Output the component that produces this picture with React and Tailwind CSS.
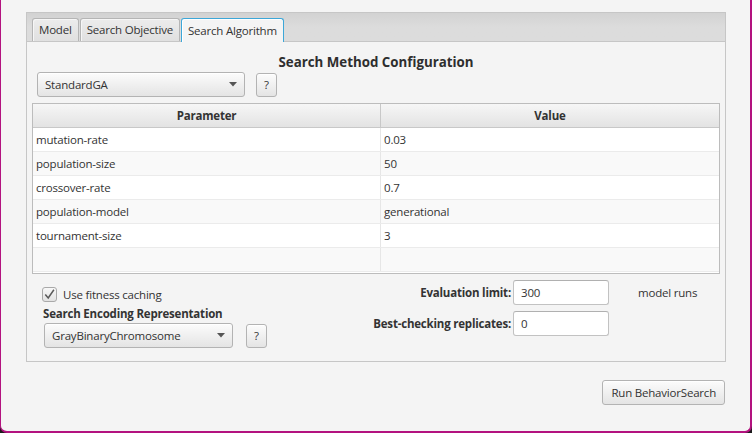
import React from "react";

function Arrow() {
  return (
    <svg width="8" height="5" viewBox="0 0 8 5" className="shrink-0">
      <path d="M0 0 L8 0 L4 4.5 Z" fill="#555555" />
    </svg>
  );
}

function Combo({ label, className }) {
  return (
    <div
      className={
        "flex items-center justify-between h-[25px] pl-[7px] pr-[7px] rounded-[3px] border border-[#b3b3b3] bg-gradient-to-b from-[#fcfcfc] to-[#e4e4e4] shadow-[inset_0_1px_0_#ffffff] text-[#333333] " +
        className
      }
    >
      <span>{label}</span>
      <Arrow />
    </div>
  );
}

function QButton() {
  return (
    <div className="flex items-center justify-center w-[21px] h-[24px] mt-[1px] rounded-[3px] border border-[#b3b3b3] bg-gradient-to-b from-[#fcfcfc] to-[#e4e4e4] shadow-[inset_0_1px_0_#ffffff] text-[#333333]">
      ?
    </div>
  );
}

function Field({ value }) {
  return (
    <div className="flex items-center h-[25px] w-[96px] pl-[7px] rounded-[3px] border border-[#c2c2c2] border-t-[#b0b0b0] bg-white text-[#333333]">
      {value}
    </div>
  );
}

const rows = [
  ["mutation-rate", "0.03"],
  ["population-size", "50"],
  ["crossover-rate", "0.7"],
  ["population-model", "generational"],
  ["tournament-size", "3"],
  ["", ""],
];

export default function App() {
  return (
    <div className="w-[752px] h-[433px] bg-[#1c1c1c] overflow-hidden font-['Open_Sans',sans-serif] text-[11.5px] tracking-[-0.2px] text-[#333333]">
      <div className="w-[752px] h-[433px] bg-[#f4f4f4] border-l border-r-2 border-b-2 border-[#b3127f] rounded-b-[7px] pl-[25px] pt-[12px]">
        <div className="flex flex-col items-end w-[700px]">
          {/* Tab pane */}
          <div className="flex flex-col w-[700px] h-[350px]">
            {/* header */}
            <div className="h-[30px] border-x border-t border-b border-[#c6c6c6] bg-gradient-to-b from-[#d2d2d2] via-[#dcdcdc] to-[#dcdcdc] flex items-end pl-[5px] gap-[1px]">
              <div className="h-[23px] px-[6px] flex items-center rounded-t-[3px] border border-b-0 border-[#b5b5b5] bg-gradient-to-b from-[#ececec] to-[#e0e0e0] shadow-[inset_1px_1px_0_#f6f6f6]">
                Model
              </div>
              <div className="h-[23px] px-[6px] flex items-center rounded-t-[3px] border border-b-0 border-[#b5b5b5] bg-gradient-to-b from-[#ececec] to-[#e0e0e0] shadow-[inset_1px_1px_0_#f6f6f6]">
                Search Objective
              </div>
              <div className="h-[24px] -mb-px px-[6px] flex items-center rounded-t-[3px] border border-b-0 border-[#3da7d8] bg-[#f4f4f4] shadow-[inset_1px_1px_0_#ffffff]">
                Search Algorithm
              </div>
            </div>
            {/* content */}
            <div className="h-[320px] border-x border-b border-[#c6c6c6] px-[5px] pt-[10px] flex flex-col">
              <div className="h-[20px] leading-[20px] text-center font-bold text-[13.3px] tracking-normal text-[#2e2e2e]">
                Search Method Configuration
              </div>
              <div className="flex h-[25px]">
                <Combo label="StandardGA" className="ml-[5px] w-[208px]" />
                <div className="ml-[11px]">
                  <QButton />
                </div>
              </div>
              {/* table */}
              <div className="mt-[6px] w-[688px] border border-[#bcbcbc] bg-white">
                <div className="flex h-[24px] border-b border-[#c8c8c8] bg-gradient-to-b from-[#f6f6f6] to-[#e3e3e3] font-bold">
                  <div className="w-[348px] border-r border-[#c8c8c8] flex items-center justify-center">
                    Parameter
                  </div>
                  <div className="flex-1 flex items-center justify-center">Value</div>
                </div>
                <div className="h-[145px] overflow-hidden">
                  {rows.map((r, i) => (
                    <div
                      key={i}
                      className={
                        "flex h-[24px] border-b border-[#ebebeb] " +
                        (i % 2 === 0 ? "bg-white" : "bg-[#f9f9f9]")
                      }
                    >
                      <div className="w-[348px] border-r border-[#e6e6e6] flex items-center pl-[3px]">
                        {r[0]}
                      </div>
                      <div className="flex-1 flex items-center pl-[3px]">{r[1]}</div>
                    </div>
                  ))}
                </div>
              </div>
              {/* bottom section */}
              <div className="flex">
                <div className="ml-[10px] w-[318px] mt-[13px] flex flex-col">
                  <div className="flex items-center h-[15px]">
                    <div className="w-[15px] h-[15px] rounded-[3px] border border-[#a9a9a9] bg-gradient-to-b from-[#f8f8f8] to-[#e2e2e2] flex items-center justify-center">
                      <svg width="13" height="13" viewBox="0 0 13 13">
                        <path d="M2.3 6.6 L5.2 10 L10.9 1.8" fill="none" stroke="#5a5a5a" strokeWidth="1.5" />
                      </svg>
                    </div>
                    <span className="ml-[6px]">Use fitness caching</span>
                  </div>
                  <div className="mt-[2px] h-[19px] leading-[19px] font-bold ml-[1px]">
                    Search Encoding Representation
                  </div>
                  <div className="flex h-[25px]">
                    <Combo label="GrayBinaryChromosome" className="ml-[2px] w-[189px]" />
                    <div className="ml-[13px]">
                      <QButton />
                    </div>
                  </div>
                </div>
                <div className="mt-[6px] flex flex-col gap-[6px]">
                  <div className="flex items-center">
                    <div className="w-[153px] text-right font-bold pr-[2px]">Evaluation limit:</div>
                    <Field value="300" />
                    <span className="ml-[29px]">model runs</span>
                  </div>
                  <div className="flex items-center">
                    <div className="w-[153px] text-right font-bold pr-[2px]">Best-checking replicates:</div>
                    <Field value="0" />
                  </div>
                </div>
              </div>
            </div>
          </div>
          <div className="mt-[18px] mr-[1px] h-[25px] px-[8px] flex items-center rounded-[3px] border border-[#b3b3b3] bg-gradient-to-b from-[#fcfcfc] to-[#e4e4e4] shadow-[inset_0_1px_0_#ffffff]">
            Run BehaviorSearch
          </div>
        </div>
      </div>
    </div>
  );
}
